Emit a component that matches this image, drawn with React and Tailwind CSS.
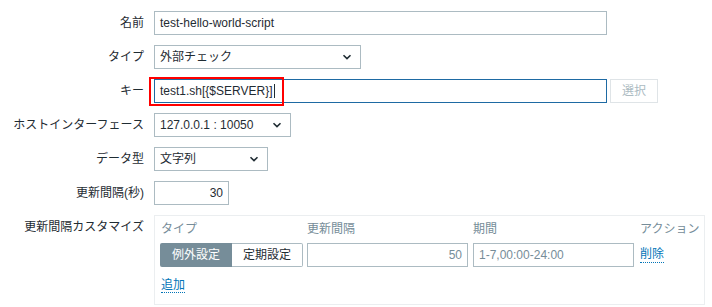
import React from "react"

const font = { fontFamily: '"Liberation Sans", Arial, "Noto Sans CJK JP", sans-serif' }

function Chevron() {
  return (
    <svg width="10" height="6" viewBox="0 0 10 6" className="shrink-0">
      <path d="M1.5 1.2 L5 4.6 L8.5 1.2" fill="none" stroke="#1f2c33" strokeWidth="1.6" />
    </svg>
  )
}

function Row({ label, children, top }) {
  return (
    <div className={`flex ${top ? "items-start" : "items-center"}`}>
      <div className={`w-[144px] shrink-0 pr-0 text-right text-[#1f2c33] ${top ? "pt-[3px]" : ""}`}>{label}</div>
      <div className="ml-[10px] flex items-center">{children}</div>
    </div>
  )
}

function Select({ w, value }) {
  return (
    <div className={`${w} flex h-[24px] items-center justify-between border border-[#acbbc2] bg-white pl-[5px] pr-[8px]`}>
      <span>{value}</span>
      <Chevron />
    </div>
  )
}

export default function App() {
  return (
    <div className="h-[307px] w-[712px] overflow-hidden bg-white text-[12px] text-[#1f2c33]" style={font}>
      <div className="flex flex-col gap-[10px] pt-[11px]">
        <Row label="名前">
          <div className="flex h-[24px] w-[453px] items-center border border-[#acbbc2] px-[5px]">test-hello-world-script</div>
        </Row>
        <Row label="タイプ">
          <Select w="w-[207px]" value="外部チェック" />
        </Row>
        <Row label="キー">
          <div className="relative flex h-[24px] w-[453px] items-center border border-[#1e6aa3] px-[5px]">
            test1.sh[{"{$SERVER}"}]<span className="ml-[1px] h-[14px] w-px bg-[#1f2c33]" />
            <div className="pointer-events-none absolute left-[-6px] top-[-3px] h-[29px] w-[135px] border-2 border-[#ff0000]" />
          </div>
          <div className="ml-[3px] flex h-[24px] w-[48px] items-center justify-center border border-[#dfe4e7] text-[#acbbc2]">選択</div>
        </Row>
        <Row label="ホストインターフェース">
          <Select w="w-[137px]" value="127.0.0.1 : 10050" />
        </Row>
        <Row label="データ型">
          <Select w="w-[114px]" value="文字列" />
        </Row>
        <Row label="更新間隔(秒)">
          <div className="flex h-[24px] w-[75px] items-center justify-end border border-[#acbbc2] px-[5px]">30</div>
        </Row>
        <Row label="更新間隔カスタマイズ" top>
          <div className="h-[90px] w-[551px] border border-[#ebeef0] pl-[5px] pt-[3px]">
            <div className="flex h-[20px] items-center text-[#768d99]">
              <div className="w-[147px] pl-[1px]">タイプ</div>
              <div className="w-[166px]">更新間隔</div>
              <div className="w-[167px]">期間</div>
              <div>アクション</div>
            </div>
            <div className="mt-[4px] flex items-center">
              <div className="flex h-[24px] w-[143px]">
                <div className="flex w-[72px] items-center justify-center rounded-l-[2px] bg-[#768d99] text-white">例外設定</div>
                <div className="flex w-[71px] items-center justify-center rounded-r-[2px] border border-l-0 border-[#acbbc2]">定期設定</div>
              </div>
              <div className="ml-[4px] flex h-[24px] w-[161px] items-center justify-end border border-[#acbbc2] px-[5px] text-[#768d99]">50</div>
              <div className="ml-[5px] flex h-[24px] w-[161px] items-center border border-[#acbbc2] px-[5px] text-[#768d99]">1-7,00:00-24:00</div>
              <span className="ml-[6px] border-b border-dotted border-[#0275b8] leading-[15px] text-[#0275b8]">削除</span>
            </div>
            <div className="mt-[9px] pl-[1px]">
              <span className="border-b border-dotted border-[#0275b8] leading-[15px] text-[#0275b8]">追加</span>
            </div>
          </div>
        </Row>
      </div>
    </div>
  )
}
